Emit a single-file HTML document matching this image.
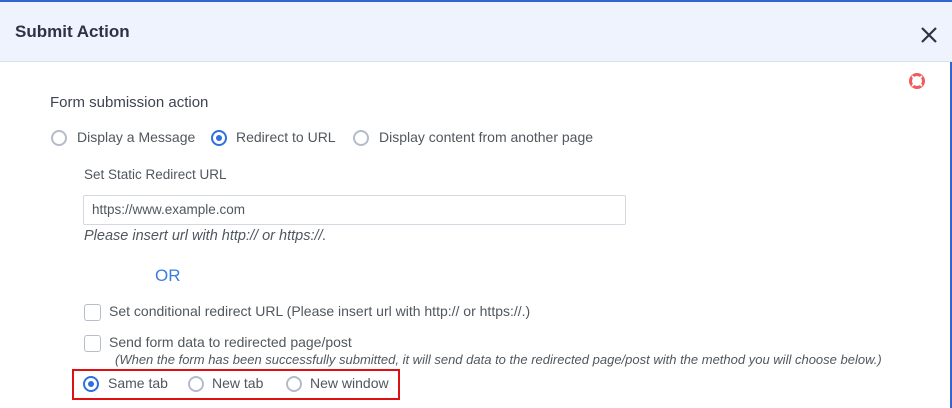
<!DOCTYPE html>
<html><head><style>
*{box-sizing:border-box;margin:0;padding:0}
body{width:952px;height:408px;overflow:hidden;background:#fff;font-family:"Liberation Sans",sans-serif;color:#50575e;position:relative}
.a{position:absolute;white-space:nowrap}
.r{position:absolute;width:16px;height:16px;border:2px solid #b3bccb;border-radius:50%;background:#fff}
.r.on{border-color:#2f6fe0}
.r.on::after{content:"";position:absolute;left:3px;top:3px;width:6px;height:6px;border-radius:50%;background:#2f6fe0}
.c{position:absolute;width:17px;height:17px;border:1.5px solid #b8bec8;border-radius:3px;background:#fff}
.t{font-size:14px}
</style></head><body>
<div class="a" style="left:0;top:0;width:952px;height:2px;background:#3366cc"></div>
<div class="a" style="left:0;top:2px;width:952px;height:60px;background:#eff3fd;border-bottom:1px solid #d9e1ee"></div>
<div class="a" style="left:15px;top:22px;font-size:17px;font-weight:bold;color:#2c3345">Submit Action</div>
<svg class="a" style="left:920px;top:26px" width="18" height="18"><path d="M2 2L16 16M16 2L2 16" stroke="#2c3345" stroke-width="2.2"/></svg>
<div class="a" style="left:950px;top:62px;width:2px;height:346px;background:#3366cc"></div>
<svg class="a" style="left:908px;top:72px" width="18" height="18"><circle cx="9" cy="9" r="6.5" fill="none" stroke="#f05a5a" stroke-width="3"/><g stroke="#fff" stroke-width="1.6"><path d="M4 4L7 7M14 4L11 7M4 14L7 11M14 14L11 11"/></g></svg>
<div class="a" style="left:50px;top:94px;font-size:15px;color:#3d4452">Form submission action</div>
<div class="r" style="left:51px;top:130px"></div><div class="a t" style="left:77px;top:129px">Display a Message</div>
<div class="r on" style="left:211px;top:130px"></div><div class="a t" style="left:236px;top:129px">Redirect to URL</div>
<div class="r" style="left:353px;top:130px"></div><div class="a t" style="left:379px;top:129px">Display content from another page</div>
<div class="a t" style="left:84px;top:167px;font-size:13.5px">Set Static Redirect URL</div>
<div class="a" style="left:83px;top:195px;width:543px;height:30px;border:1px solid #d3d8e0;border-radius:2px"></div>
<div class="a" style="left:92px;top:202px;font-size:13.5px">https://www.example.com</div>
<div class="a" style="left:84px;top:228px;font-size:14.5px;font-style:italic">Please insert url with http:// or https://.</div>
<div class="a" style="left:155px;top:266px;font-size:17px;color:#3b7de0">OR</div>
<div class="c" style="left:84px;top:304px"></div><div class="a t" style="left:109px;top:303px">Set conditional redirect URL (Please insert url with http:// or https://.)</div>
<div class="c" style="left:84px;top:335px"></div><div class="a t" style="left:109px;top:334px">Send form data to redirected page/post</div>
<div class="a" style="left:115px;top:352px;font-size:13px;font-style:italic">(When the form has been successfully submitted, it will send data to the redirected page/post with the method you will choose below.)</div>
<div class="a" style="left:72px;top:369px;width:328px;height:31px;border:2px solid #e01010"></div>
<div class="r on" style="left:83px;top:376px"></div><div class="a t" style="left:108px;top:375px">Same tab</div>
<div class="r" style="left:188px;top:376px"></div><div class="a t" style="left:212px;top:375px">New tab</div>
<div class="r" style="left:286px;top:376px"></div><div class="a t" style="left:310px;top:375px">New window</div>
</body></html>
